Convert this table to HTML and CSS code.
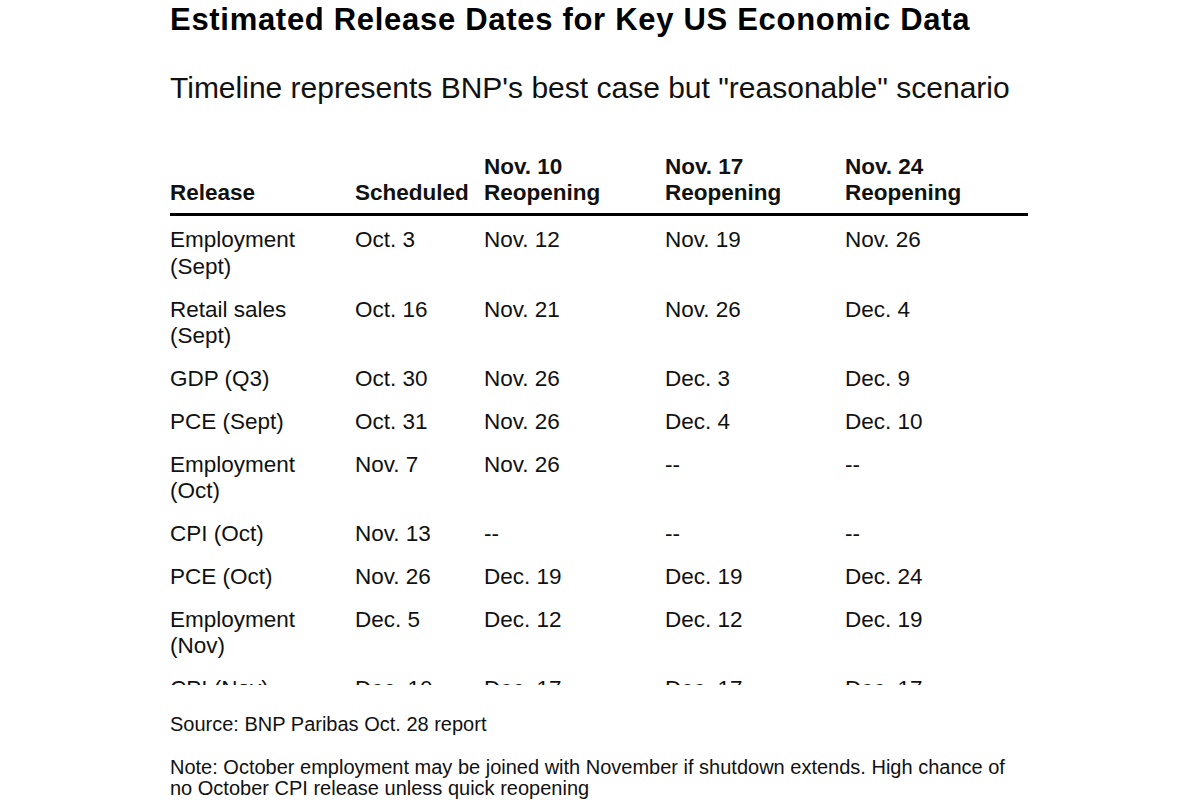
FILE: index.html
```html
<!DOCTYPE html>
<html lang="en">
<head>
<meta charset="utf-8">
<title>Estimated Release Dates for Key US Economic Data</title>
<link rel="stylesheet" href="styles.css">
</head>
<body>
<main class="page">
  <h1 class="title">Estimated Release Dates for Key US Economic Data</h1>
  <p class="subtitle">Timeline represents BNP's best case but "reasonable" scenario</p>
  <div class="table-wrap">
    <table class="data">
      <colgroup>
        <col class="c-release">
        <col class="c-sched">
        <col class="c-a">
        <col class="c-b">
        <col class="c-c">
      </colgroup>
      <thead>
        <tr>
          <th>Release</th>
          <th>Scheduled</th>
          <th>Nov. 10<br>Reopening</th>
          <th>Nov. 17<br>Reopening</th>
          <th>Nov. 24<br>Reopening</th>
        </tr>
      </thead>
      <tbody>
        <tr><td>Employment (Sept)</td><td>Oct. 3</td><td>Nov. 12</td><td>Nov. 19</td><td>Nov. 26</td></tr>
        <tr><td>Retail sales (Sept)</td><td>Oct. 16</td><td>Nov. 21</td><td>Nov. 26</td><td>Dec. 4</td></tr>
        <tr><td>GDP (Q3)</td><td>Oct. 30</td><td>Nov. 26</td><td>Dec. 3</td><td>Dec. 9</td></tr>
        <tr><td>PCE (Sept)</td><td>Oct. 31</td><td>Nov. 26</td><td>Dec. 4</td><td>Dec. 10</td></tr>
        <tr><td>Employment (Oct)</td><td>Nov. 7</td><td>Nov. 26</td><td>--</td><td>--</td></tr>
        <tr><td>CPI (Oct)</td><td>Nov. 13</td><td>--</td><td>--</td><td>--</td></tr>
        <tr><td>PCE (Oct)</td><td>Nov. 26</td><td>Dec. 19</td><td>Dec. 19</td><td>Dec. 24</td></tr>
        <tr><td>Employment (Nov)</td><td>Dec. 5</td><td>Dec. 12</td><td>Dec. 12</td><td>Dec. 19</td></tr>
        <tr><td>CPI (Nov)</td><td>Dec. 10</td><td>Dec. 17</td><td>Dec. 17</td><td>Dec. 17</td></tr>
      </tbody>
    </table>
  </div>
  <p class="source">Source: BNP Paribas Oct. 28 report</p>
  <p class="note">Note: October employment may be joined with November if shutdown extends. High chance of no October CPI release unless quick reopening</p>
</main>
</body>
</html>
```

FILE: styles.css
```css
html, body {
  margin: 0;
  padding: 0;
  background: #ffffff;
}

body {
  font-family: "Liberation Sans", Arial, Helvetica, sans-serif;
  color: #111111;
}

.page {
  width: 860px;
  margin: 0 auto;
  padding-top: 2px;
}

.title {
  margin: 0;
  font-size: 31px;
  line-height: 36px;
  font-weight: 700;
  letter-spacing: 0.7px;
  color: #000000;
}

.subtitle {
  margin: 32px 0 0;
  font-size: 30px;
  line-height: 36px;
  font-weight: 400;
  color: #111111;
}

.table-wrap {
  margin-top: 48px;
  height: 531px;
  overflow: hidden;
}

.data {
  width: 858px;
  table-layout: fixed;
  border-collapse: collapse;
  border-spacing: 0;
  font-size: 22.5px;
}

.c-release { width: 185px; }
.c-sched { width: 129px; }
.c-a { width: 181px; }
.c-b { width: 180px; }
.c-c { width: 183px; }

.data th {
  text-align: left;
  vertical-align: bottom;
  font-weight: 700;
  line-height: 26px;
  padding: 0 0 7px;
  border-bottom: 3px solid #000000;
  color: #111111;
  white-space: nowrap;
}

.data td {
  text-align: left;
  vertical-align: top;
  line-height: 26.75px;
  padding: 11px 8px 5px 0;
  color: #111111;
}
.data td:first-child {
  padding-right: 40px;
}

.source {
  margin: 28px 0 0;
  font-size: 20px;
  line-height: 22px;
  color: #111111;
}

.note {
  margin: 22px 0 0;
  font-size: 20px;
  line-height: 21px;
  color: #111111;
}
```
